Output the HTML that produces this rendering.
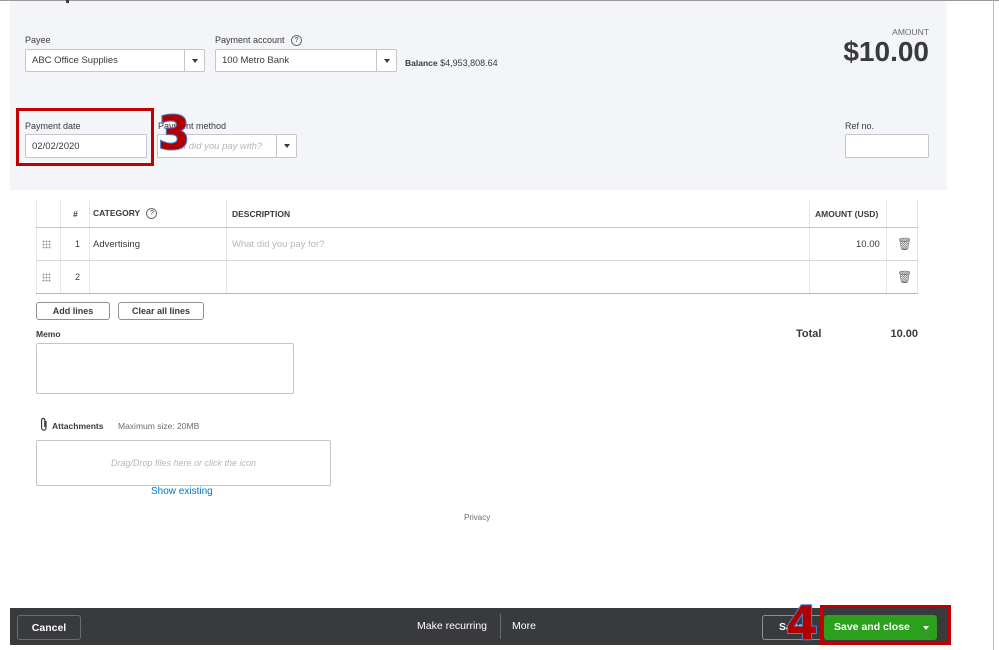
<!DOCTYPE html>
<html><head><meta charset="utf-8"><style>
*{box-sizing:border-box;margin:0;padding:0}
body{width:999px;height:650px;background:#fff;font-family:"Liberation Sans",sans-serif;color:#393a3d;position:relative;overflow:hidden;font-size:9px}
.a{position:absolute}
.lbl{font-size:9px;color:#393a3d}
.inp{position:absolute;background:#fff;border:1px solid #c4c6cc;border-radius:2px;font-size:9.5px;padding-left:6px;display:flex;align-items:center}
.dd{position:absolute;right:0;top:0;bottom:0;width:20px;border-left:1px solid #c4c6cc;display:flex;align-items:center;justify-content:center}
.dd:after{content:"";border-left:3.5px solid transparent;border-right:3.5px solid transparent;border-top:4px solid #393a3d}
.btn{position:absolute;border:1px solid #8d9096;border-radius:3px;background:#fff;font-size:9px;font-weight:bold;display:flex;align-items:center;justify-content:center}
.hl{position:absolute;height:1px;background:#c4c6cc}
.vl{position:absolute;width:1px;background:#e3e5e8}
.q{display:inline-block;width:11px;height:11px;border:1px solid #6b6c72;border-radius:50%;font-size:7px;text-align:center;line-height:9px;vertical-align:middle;margin-left:4px;font-weight:normal}
.num{font-family:"DejaVu Sans",sans-serif;font-weight:bold;font-size:46px;color:#b00000;-webkit-text-stroke:2px #4a7fd0;position:absolute;paint-order:stroke fill}
.grip{position:absolute;width:9px;height:9px;background-image:radial-gradient(circle,#999 0.8px,transparent 1px);background-size:3px 3px}
</style></head><body>
<div class="a" style="left:0;top:0;width:999px;height:1px;background:#999"></div>
<div class="a" style="left:993px;top:0;width:1px;height:650px;background:#bbb"></div>
<div class="a" style="left:10px;top:1px;width:937px;height:189px;background:#f4f5f8"></div>
<div class="a" style="left:66px;top:0;width:3px;height:3px;background:#393a3d"></div>

<div class="a lbl" style="left:25px;top:35px">Payee</div>
<div class="inp" style="left:25px;top:49px;width:180px;height:23px">ABC Office Supplies<div class="dd"></div></div>
<div class="a lbl" style="left:215px;top:35px">Payment account <span class="q">?</span></div>
<div class="inp" style="left:215px;top:49px;width:182px;height:23px">100 Metro Bank<div class="dd"></div></div>
<div class="a" style="left:405px;top:58px;font-size:9px"><b style="font-size:8.5px">Balance</b> $4,953,808.64</div>
<div class="a" style="right:70px;top:27px;font-size:8.5px;color:#6b6c72">AMOUNT</div>
<div class="a" style="right:70px;top:36px;font-size:28px;font-weight:bold;color:#393a3d">$10.00</div>

<div class="a" style="left:16px;top:108px;width:138px;height:58px;border:3px solid #c00000"></div>
<div class="a lbl" style="left:25px;top:121px">Payment date</div>
<div class="inp" style="left:25px;top:134px;width:122px;height:24px">02/02/2020</div>
<div class="a lbl" style="left:158px;top:121px">Payment method</div>
<div class="inp" style="left:157px;top:134px;width:140px;height:24px;color:#b5b7bc;font-style:italic">What did you pay with?<div class="dd"></div></div>
<div class="num" style="left:158px;top:106px">3</div>
<div class="a lbl" style="left:845px;top:121px">Ref no.</div>
<div class="inp" style="left:845px;top:134px;width:84px;height:24px"></div>

<div class="a" style="left:36px;top:200px;width:882px;height:94px">
<div class="vl" style="left:0;top:0;height:94px"></div>
<div class="vl" style="left:24px;top:0;height:94px"></div>
<div class="vl" style="left:53px;top:0;height:94px"></div>
<div class="vl" style="left:190px;top:0;height:94px"></div>
<div class="vl" style="left:773px;top:0;height:94px"></div>
<div class="vl" style="left:850px;top:0;height:94px"></div>
<div class="vl" style="left:881px;top:0;height:94px"></div>
<div class="hl" style="left:0;top:27px;width:882px;background:#c4c6cc"></div>
<div class="hl" style="left:0;top:60px;width:882px;background:#d4d7dc"></div>
<div class="hl" style="left:0;top:93px;width:882px;background:#b5b7bc"></div>
<div class="a" style="left:37px;top:9px;font-size:8.5px;font-weight:bold">#</div>
<div class="a" style="left:57px;top:8px;font-size:8.5px;font-weight:bold">CATEGORY <span class="q">?</span></div>
<div class="a" style="left:196px;top:9px;font-size:8.5px;font-weight:bold">DESCRIPTION</div>
<div class="a" style="left:779px;top:9px;font-size:8.5px;font-weight:bold">AMOUNT (USD)</div>
<div class="grip" style="left:6px;top:40px"></div>
<div class="a" style="left:39px;top:39px;font-size:9px">1</div>
<div class="a" style="left:57px;top:39px;font-size:9.5px">Advertising</div>
<div class="a" style="left:196px;top:39px;font-size:9.5px;color:#b5b7bc">What did you pay for?</div>
<div class="a" style="left:820px;top:39px;font-size:9.5px">10.00</div>
<div class="a" style="left:861px;top:37px;font-size:12px;color:#6b6c72">🗑</div>
<div class="grip" style="left:6px;top:73px"></div>
<div class="a" style="left:39px;top:72px;font-size:9px">2</div>
<div class="a" style="left:861px;top:70px;font-size:12px;color:#6b6c72">🗑</div>
</div>

<div class="btn" style="left:36px;top:302px;width:74px;height:18px">Add lines</div>
<div class="btn" style="left:118px;top:302px;width:86px;height:18px">Clear all lines</div>
<div class="a" style="left:796px;top:328px;font-size:11px;font-weight:bold">Total</div>
<div class="a" style="right:81px;top:328px;font-size:11px;font-weight:bold">10.00</div>

<div class="a lbl" style="left:36px;top:329px;font-weight:bold;font-size:8.5px">Memo</div>
<div class="a" style="left:36px;top:343px;width:258px;height:51px;border:1px solid #c4c6cc;border-radius:2px"></div>
<svg class="a" style="left:39px;top:417px" width="10" height="15" viewBox="0 0 10 15"><path d="M7 4 V11 a2.2 2.2 0 0 1 -4.4 0 V3 a1.6 1.6 0 0 1 3.2 0 V10" fill="none" stroke="#393a3d" stroke-width="1.2"/></svg>
<div class="a" style="left:52px;top:421px;font-size:8.5px;font-weight:bold">Attachments</div>
<div class="a" style="left:118px;top:421px;font-size:8.5px;color:#6b6c72">Maximum size: 20MB</div>
<div class="a" style="left:36px;top:440px;width:295px;height:46px;border:1px solid #c4c6cc;border-radius:2px;display:flex;align-items:center;justify-content:center;font-size:9px;font-style:italic;color:#b5b7bc">Drag/Drop files here or click the icon</div>
<div class="a" style="left:151px;top:486px;font-size:10px;color:#0077c5">Show existing</div>
<div class="a" style="left:464px;top:513px;font-size:8px;color:#6b6c72">Privacy</div>

<div class="a" style="left:10px;top:608px;width:938px;height:37px;background:#393a3d"></div>
<div class="a" style="left:17px;top:615px;width:64px;height:25px;border:1px solid #6b6c72;border-radius:3px;color:#fff;font-size:10.5px;font-weight:bold;display:flex;align-items:center;justify-content:center">Cancel</div>
<div class="a" style="left:417px;top:620px;color:#fff;font-size:10.5px">Make recurring</div>
<div class="a" style="left:500px;top:614px;width:1px;height:25px;background:#6b6c72"></div>
<div class="a" style="left:512px;top:620px;color:#fff;font-size:10.5px">More</div>
<div class="a" style="left:762px;top:615px;width:60px;height:25px;border:1px solid #8d9096;border-radius:3px;color:#fff;font-size:10.5px;font-weight:bold;padding:5px 0 0 16px">Save</div>
<div class="a" style="left:820px;top:605px;width:131px;height:40px;border:3px solid #c00000"></div>
<div class="a" style="left:824px;top:615px;width:113px;height:25px;background:#2ca01c;border-radius:3px;color:#fff;font-size:10.5px;font-weight:bold;padding:6px 0 0 10px">Save and close</div>
<div class="a" style="left:923px;top:626px;border-left:3.5px solid transparent;border-right:3.5px solid transparent;border-top:4px solid #fff"></div>
<div class="num" style="left:786px;top:596px">4</div>
</body></html>
